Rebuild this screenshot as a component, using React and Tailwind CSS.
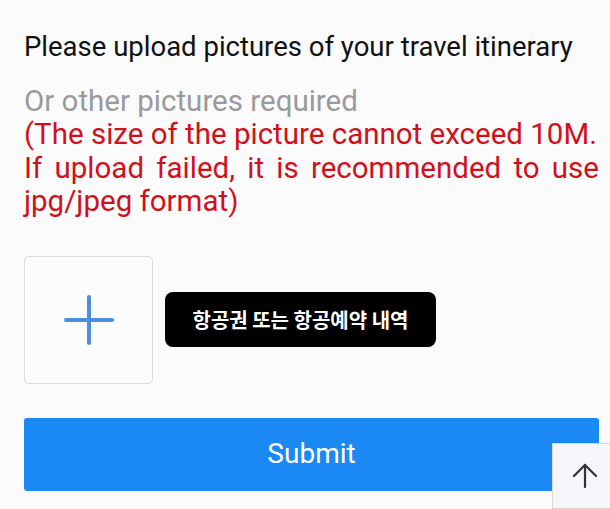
import { ArrowUp } from "lucide-react";

export default function App() {
  return (
    <div className="relative h-[509px] w-[610px] overflow-hidden bg-[#fbfbfb] font-['Roboto',sans-serif]">
      <div className="pl-6 pr-[11px] pt-[29px]">
        <h1 className="whitespace-nowrap text-[27.5px] leading-[36px] text-[#111]">
          Please upload pictures of your travel itinerary
        </h1>
        <div className="mt-[19px] text-[29.5px] leading-[34px]">
          <p className="text-[#9a9a9a]">Or other pictures required</p>
          <div className="text-[#d0111b] leading-[33.5px]">
            <p className="whitespace-nowrap">(The size of the picture cannot exceed 10M.</p>
            <p className="text-justify [text-align-last:justify]">
              If upload failed, it is recommended to use
            </p>
            <p>jpg/jpeg format)</p>
          </div>
        </div>

        <div className="mt-[37px] flex items-center gap-3">
          <button className="flex h-[128px] w-[129px] items-center justify-center rounded-[5px] border border-[#dadada] bg-[#fcfcfc]">
            <svg width="50" height="50" viewBox="0 0 50 50">
              <path
                d="M25 2v46M2 25h46"
                stroke="#4a8fe0"
                strokeWidth="4"
                strokeLinecap="round"
              />
            </svg>
          </button>
          <div className="flex h-[55px] w-[271px] items-center justify-center rounded-[8px] bg-black font-['Noto_Sans_CJK_KR',sans-serif] text-[20px] font-bold text-white">
            항공권 또는 항공예약 내역
          </div>
        </div>

        <button className="mt-[34px] flex h-[73px] w-full items-center justify-center rounded-[3px] bg-[#1a89f4] text-[28px] text-white">
          Submit
        </button>
      </div>

      <button className="absolute left-[552px] top-[443px] flex h-[66px] w-[60px] items-center justify-center border border-[#d8d8d8] bg-[#f4f6fa]">
        <ArrowUp className="ml-[6px] h-[38px] w-[38px] text-[#333]" strokeWidth={1.4} />
      </button>
    </div>
  );
}
